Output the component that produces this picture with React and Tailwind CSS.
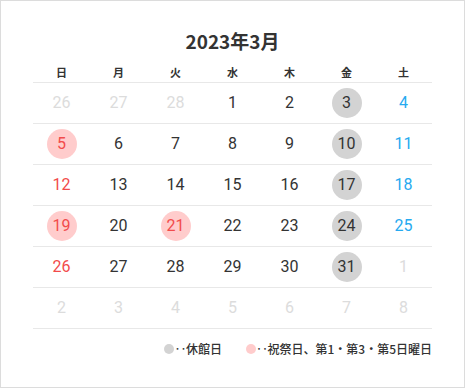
import React from "react";

const WEEK = ["日", "月", "火", "水", "木", "金", "土"];

// kind: "out" (other month), "closed" (休館日), "holiday" (祝祭日 etc)
const DAYS = [
  [26, "out"], [27, "out"], [28, "out"], [1], [2], [3, "closed"], [4],
  [5, "holiday"], [6], [7], [8], [9], [10, "closed"], [11],
  [12], [13], [14], [15], [16], [17, "closed"], [18],
  [19, "holiday"], [20], [21, "holiday"], [22], [23], [24, "closed"], [25],
  [26], [27], [28], [29], [30], [31, "closed"], [1, "out"],
  [2, "out"], [3, "out"], [4, "out"], [5, "out"], [6, "out"], [7, "out"], [8, "out"],
];

function DayCell({ n, kind, col }) {
  let color = "text-[#333]";
  if (kind === "out") color = "text-[#dcdcdc]";
  else if (kind === "holiday") color = "text-[#f24b4b]";
  else if (col === 0) color = "text-[#f24b4b]";
  else if (col === 6) color = "text-[#26aaf0]";

  let bg = "";
  if (kind === "closed") bg = "bg-[#d3d3d3]";
  if (kind === "holiday") bg = "bg-[#ffcccc]";

  return (
    <div className="flex h-[40px] items-center justify-center">
      <div className={`flex h-[30px] w-[30px] items-center justify-center rounded-full ${bg} ${color}`}>
        {n}
      </div>
    </div>
  );
}

export default function App() {
  const rows = [];
  for (let i = 0; i < 6; i++) rows.push(DAYS.slice(i * 7, i * 7 + 7));

  return (
    <div
      className="h-[388px] w-[465px] border border-[#dcdcdc] bg-white px-[32px] pt-[26px]"
      style={{ fontFamily: "Roboto, 'Noto Sans CJK JP', sans-serif" }}
    >
      <h1
        className="text-center text-[19px] font-bold leading-[28px] text-[#333]"
        style={{ fontFamily: "'Noto Sans CJK JP', sans-serif" }}
      >
        2023年3月
      </h1>

      <div
        className="mt-[7px] grid h-[21px] grid-cols-7 border-b border-[#e8e8e8] text-[11px] font-bold text-[#333]"
        style={{ fontFamily: "'Noto Sans CJK JP', sans-serif" }}
      >
        {WEEK.map((w) => (
          <div key={w} className="flex items-center justify-center leading-none">
            {w}
          </div>
        ))}
      </div>

      {rows.map((row, r) => (
        <div key={r} className="grid grid-cols-7 border-b border-[#e8e8e8] text-[16px]">
          {row.map(([n, kind], c) => (
            <DayCell key={c} n={n} kind={kind} col={c} />
          ))}
        </div>
      ))}

      <div
        className="mt-[11px] flex items-center justify-end gap-[24px] text-[12px] font-medium leading-[18px] text-[#333]"
        style={{ fontFamily: "'Noto Sans CJK JP', sans-serif" }}
      >
        <div className="flex items-center">
          <span className="inline-block h-[10px] w-[10px] rounded-full bg-[#d3d3d3]" />
          <span className="tracking-[-0.5px]">‥</span>
          <span>休館日</span>
        </div>
        <div className="flex items-center">
          <span className="inline-block h-[10px] w-[10px] rounded-full bg-[#ffcccc]" />
          <span className="tracking-[-0.5px]">‥</span>
          <span>祝祭日、第1・第3・第5日曜日</span>
        </div>
      </div>
    </div>
  );
}
